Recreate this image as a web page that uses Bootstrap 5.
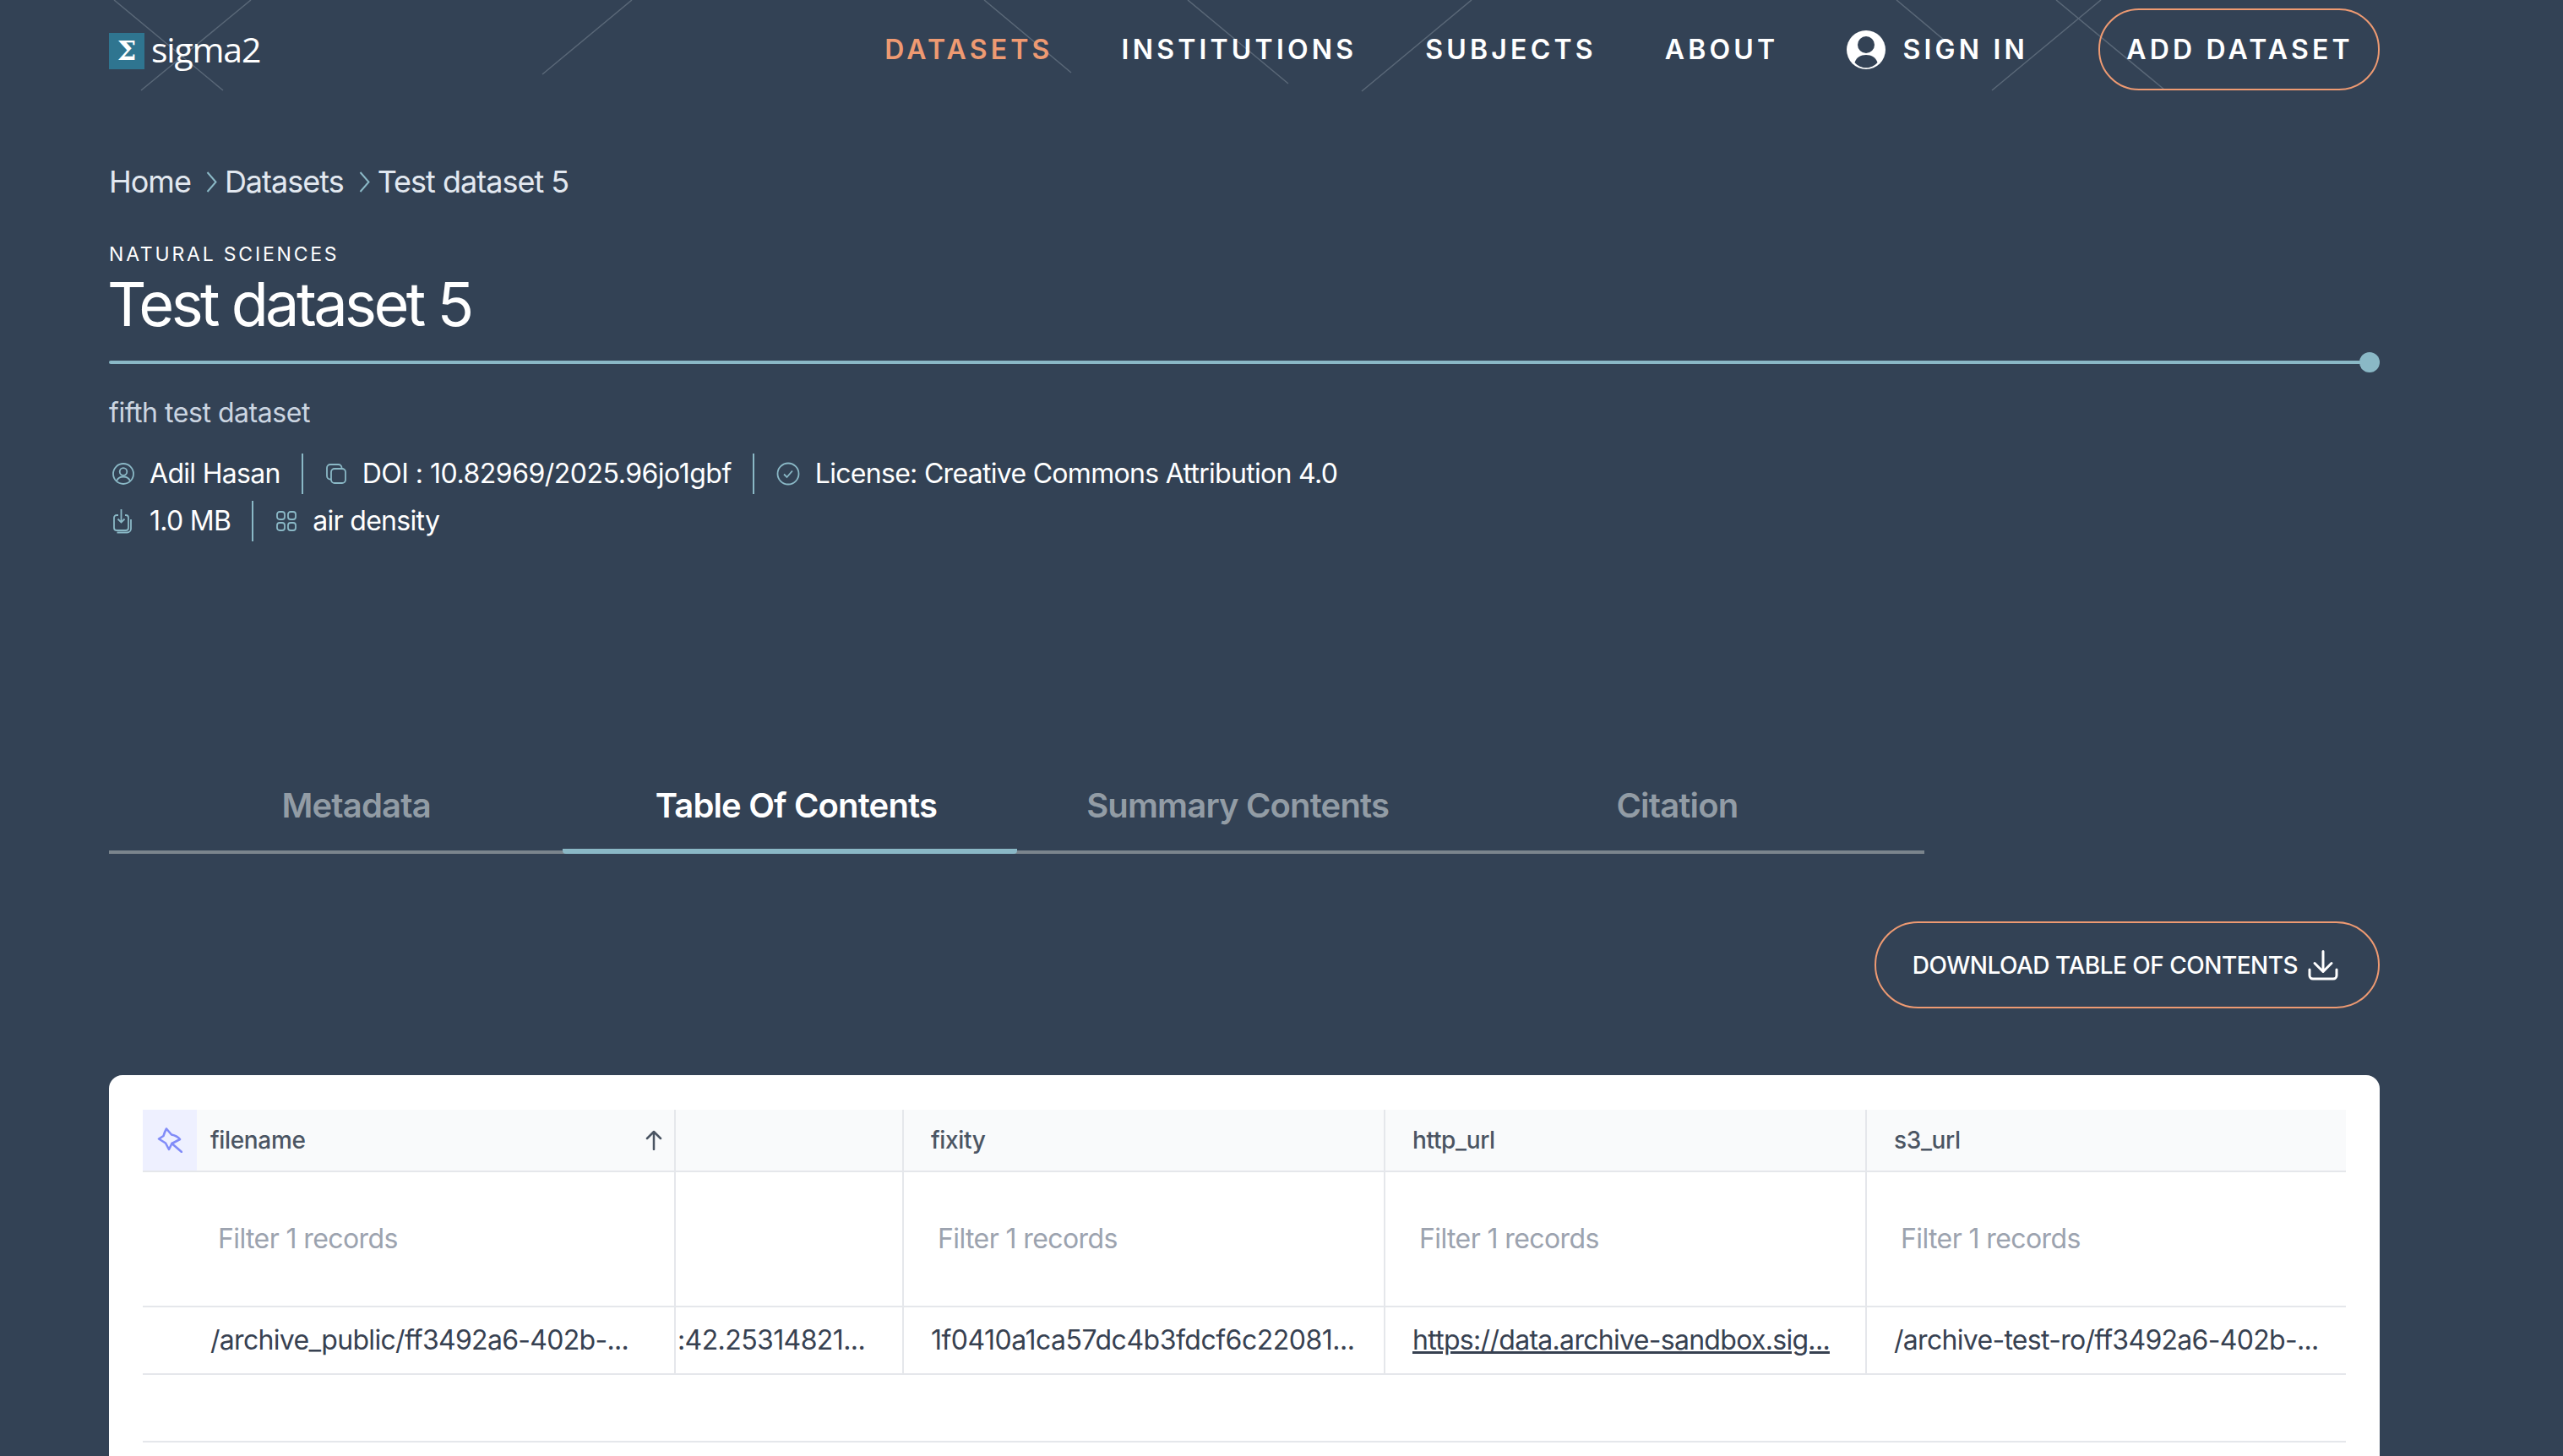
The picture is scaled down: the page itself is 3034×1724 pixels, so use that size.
<!DOCTYPE html>
<html lang="en">
<head>
<meta charset="utf-8">
<title>Test dataset 5</title>
<link href="https://cdn.jsdelivr.net/npm/bootstrap@5.3.0/dist/css/bootstrap.min.css" rel="stylesheet">
<style>
html,body{height:100%;}
body{background:#334255;font-family:Inter,"Liberation Sans",sans-serif;color:#fff;overflow:hidden;font-size:32px;position:relative;}
.deco{position:absolute;top:0;left:0;width:3034px;height:120px;pointer-events:none;}
.deco line{stroke:#5a6878;stroke-width:1.5;}
.shell{position:relative;padding:0 217px 0 129px;}
.topbar{height:108px;padding:10px 0 0;align-items:flex-start;}
.brandbox{display:flex;align-items:center;margin:29px 0 0;padding:0;height:43px;}
.sigbox{width:42px;height:43px;background:#2f7590;color:#fff;font:700 32px "DejaVu Serif",serif;line-height:43px;text-align:center;}
.sigword{font:500 41px "Open Sans",sans-serif;letter-spacing:-1.2px;color:#fff;margin-left:8px;line-height:43px;position:relative;top:-2px;}
.topnav{gap:81px;align-items:center;height:97px;}
.topbar .topnav .nav-link{padding:0;color:#fff;font-size:32px;font-weight:600;letter-spacing:4.2px;line-height:42px;display:flex;align-items:center;gap:20px;}
.topbar .topnav .nav-link.active{color:#ee9a72;}
.signlink{margin-right:2px;}
.btnpill{--bs-btn-color:#fff;--bs-btn-border-color:#ee9a72;--bs-btn-hover-color:#fff;--bs-btn-hover-border-color:#ee9a72;--bs-btn-hover-bg:transparent;--bs-btn-border-width:2px;}
.addbtn{width:333px;height:97px;border-radius:48px;font-size:32px;font-weight:600;letter-spacing:4.2px;padding:0 0 0 2px;display:flex;align-items:center;justify-content:center;}
.crumbs{margin:85px 0 0;height:44px;font-size:36px;line-height:44px;letter-spacing:-1px;}
.crumbs .breadcrumb-item{color:#e2e8f0;padding:0;display:flex;align-items:center;}
.crumbs .breadcrumb-item+.breadcrumb-item::before{display:none;}
.crumbs svg{margin:0 9px 0 18px;}
.crumbs a{color:#e2e8f0;text-decoration:none;}
.eyebrow{margin-top:45px;font-size:23px;line-height:38px;letter-spacing:2.8px;font-weight:400;height:38px;}
.pagetitle{font-size:72px;font-weight:400;line-height:80px;margin:0 0 0 -2px;letter-spacing:-3.6px;height:80px;}
.ruleline{position:relative;height:4px;background:#8ab8c6;margin-top:27px;border-radius:2px;}
.ruledot{position:absolute;right:0;top:-10px;width:24px;height:24px;border-radius:50%;background:#8ab8c6;}
.subline{font-size:32px;line-height:40px;color:#cbd5e1;margin-top:38px;letter-spacing:-.45px;}
.metablock{margin-top:28px;display:flex;flex-direction:column;gap:8px;}
.metarow{display:flex;height:48px;align-items:center;font-size:32px;line-height:48px;letter-spacing:-.7px;}
.metaitem{display:flex;align-items:center;height:48px;padding-right:25px;}
.metaitem+.metaitem{border-left:2px solid #8ab8c6;padding-left:26px;}
.metaitem svg{flex:none;margin-right:18px;margin-left:4px;}
.metaitem+.metaitem svg{margin-left:0;}
.metaitem .stackicon{margin-right:20px;}
.doitext{letter-spacing:-.5px;}
.tabstrip{width:2149px;border-bottom:4px solid #7b858d;flex-wrap:nowrap;margin-top:270px;}
.tabstrip .nav-item{flex:0 0 537.25px;}
.tabstrip .nav-link{display:block;height:100px;margin-bottom:-4px;padding:0;border:0;border-bottom:6px solid transparent;background:transparent;font-size:40px;font-weight:600;line-height:50px;padding-top:18px;color:#929ca5;text-align:center;box-sizing:border-box;border-radius:0;letter-spacing:-.85px;}
.tabstrip .nav-link.active{color:#fff;border-bottom-color:#8ab8c6;border-radius:0 0 4px 4px;}
.pl-a{padding-left:48px!important;}.pl-b{padding-left:15px!important;}.pr-c{padding-right:14px!important;}.pr-d{padding-right:48px!important;}
.dlbar{display:flex;justify-content:flex-end;margin-top:80px;}
.dlbtn{width:598px;height:103px;border-radius:52px;font-size:28px;font-weight:500;padding:0 4px 0 0;display:flex;align-items:center;justify-content:center;gap:12px;letter-spacing:-.5px;text-transform:uppercase;}
.datacard{margin-top:79px;background:#fff;border:0;border-radius:16px;padding:41px 40px 80px;color:#374151;}
.datatable{width:2608px;table-layout:fixed;border-collapse:separate;border-spacing:0;margin:0;--bs-table-bg:transparent;}
.datatable th,.datatable td{padding:0;border-bottom:2px solid #e5e7eb;vertical-align:middle;white-space:nowrap;overflow:hidden;font-weight:400;}
.datatable tr>*+*{border-left:2px solid #e5e7eb;}
.datatable tr.blankrow>*{border-left:0;}
.datatable thead th{background:#f9fafb;height:74px;font-size:28px;color:#4b5563;font-weight:500;padding-left:32px;letter-spacing:-.35px;}
.datatable thead th.firsthead{padding:0;}
.firstwrap{display:flex;align-items:center;height:72px;}
.pinbox{width:64px;height:72px;background:#eef0ff;display:flex;align-items:center;justify-content:center;flex:none;}
.headname{margin-left:16px;flex:1;}
.sortarrow{margin-right:13px;flex:none;}
.filterrow td{height:160px;font-size:32px;color:#9ca3af;padding-left:40px;letter-spacing:-.6px;}
.filterrow td.fc1{padding-left:89px;}
.datarow td{height:80px;font-size:32px;color:#374151;padding-left:32px;letter-spacing:-.7px;}
.datarow td.fc1{padding-left:80px;}
.datarow td.fc2{padding-left:2px;letter-spacing:-.6px;}
.datarow td.fc3{letter-spacing:-.5px;}
.datarow a{color:#374151;}
.blankrow td{height:80px;}
</style>
</head>
<body>
<svg class="deco" viewBox="0 0 3034 120" aria-hidden="true">
<line x1="135" y1="0" x2="264" y2="107"/><line x1="297" y1="0" x2="167" y2="107"/><line x1="748" y1="0" x2="642" y2="88"/>
<line x1="1165" y1="0" x2="1268" y2="86"/><line x1="1406" y1="0" x2="1525" y2="99"/><line x1="1742" y1="0" x2="1612" y2="108"/>
<line x1="2245" y1="0" x2="2301" y2="47"/><line x1="2434" y1="0" x2="2562" y2="106"/><line x1="2487" y1="0" x2="2358" y2="107"/>
</svg>
<div class="shell">
  <nav class="navbar navbar-expand topbar">
    <div class="d-flex justify-content-between align-items-start w-100">
      <a class="navbar-brand brandbox" href="#"><span class="sigbox">Σ</span><span class="sigword">sigma2</span></a>
      <ul class="navbar-nav topnav">
        <li class="nav-item"><a class="nav-link active" href="#">DATASETS</a></li>
        <li class="nav-item"><a class="nav-link" href="#">INSTITUTIONS</a></li>
        <li class="nav-item"><a class="nav-link" href="#">SUBJECTS</a></li>
        <li class="nav-item"><a class="nav-link" href="#">ABOUT</a></li>
        <li class="nav-item signlink"><a class="nav-link" href="#">
          <svg width="46" height="46" viewBox="0 0 46 46"><circle cx="23" cy="23" r="23" fill="#fff"/><circle cx="23" cy="17" r="10" fill="#334255"/><path d="M9.500 38c2-6 7-9 13.500-9s11.500 3 13.500 9c-3.500 4-8.500 6.300-13.500 6.300S13 42 9.500 38z" fill="#334255"/></svg>
          SIGN IN</a></li>
        <li class="nav-item"><a class="btn btnpill addbtn" href="#">ADD DATASET</a></li>
      </ul>
    </div>
  </nav>

  <ol class="breadcrumb crumbs">
    <li class="breadcrumb-item"><a href="#">Home</a></li>
    <li class="breadcrumb-item"><svg width="13" height="25" viewBox="0 0 13 25"><path d="M1.500 1l10 11.500-10 11.500" fill="none" stroke="#8ab8c6" stroke-width="2"/></svg><a href="#">Datasets</a></li>
    <li class="breadcrumb-item active"><svg width="13" height="25" viewBox="0 0 13 25"><path d="M1.500 1l10 11.500-10 11.500" fill="none" stroke="#8ab8c6" stroke-width="2"/></svg>Test dataset 5</li>
  </ol>

  <div class="eyebrow">NATURAL SCIENCES</div>
  <h1 class="pagetitle">Test dataset 5</h1>
  <div class="ruleline"><span class="ruledot"></span></div>
  <p class="subline mb-0">fifth test dataset</p>

  <div class="metablock">
    <div class="metarow">
      <div class="metaitem"><svg width="26" height="26" viewBox="0 0 26 26" fill="none" stroke="#8ab8c6" stroke-width="1.800"><circle cx="13" cy="13" r="12"/><circle cx="13" cy="10.500" r="4.300"/><path d="M5 21.500c1.500-3.500 4.500-5 8-5s6.500 1.500 8 5"/></svg>Adil Hasan</div>
      <div class="metaitem doitext"><svg width="26" height="26" viewBox="0 0 26 26" fill="none" stroke="#8ab8c6" stroke-width="1.800"><rect x="7" y="7" width="17" height="17" rx="4"/><path d="M7 19.500H6a4 4 0 0 1-4-4V6a4 4 0 0 1 4-4h9.500a4 4 0 0 1 4 4v1"/></svg>DOI : 10.82969/2025.96jo1gbf</div>
      <div class="metaitem"><svg width="28" height="28" viewBox="0 0 28 28" fill="none" stroke="#8ab8c6" stroke-width="1.800"><circle cx="14" cy="14" r="12.500"/><path d="M9 14.500l3.500 3.500 6.500-7.500"/></svg>License: Creative Commons Attribution 4.0</div>
    </div>
    <div class="metarow">
      <div class="metaitem"><svg class="stackicon" width="24" height="30" viewBox="0 0 24 30" fill="none" stroke="#8ab8c6" stroke-width="1.800"><path d="M7 8H5a3 3 0 0 0-3 3v12a3 3 0 0 0 3 3h11a3 3 0 0 0 3-3V11a3 3 0 0 0-3-3h-1"/><path d="M5.500 28.500h12a4.500 4.500 0 0 0 4.500-4.500V13"/><path d="M10.500 1v15M6.500 12.500l4 4 4-4"/></svg>1.0 MB</div>
      <div class="metaitem"><svg width="26" height="26" viewBox="0 0 26 26" fill="none" stroke="#8ab8c6" stroke-width="1.800"><rect x="2" y="2" width="9" height="9" rx="3"/><rect x="15" y="2" width="9" height="9" rx="3"/><rect x="2" y="15" width="9" height="9" rx="3"/><rect x="15" y="15" width="9" height="9" rx="3"/></svg>air density</div>
    </div>
  </div>

  <ul class="nav tabstrip">
    <li class="nav-item"><a class="nav-link pl-a" href="#">Metadata</a></li>
    <li class="nav-item"><a class="nav-link active pl-b" href="#">Table Of Contents</a></li>
    <li class="nav-item"><a class="nav-link pr-c" href="#">Summary Contents</a></li>
    <li class="nav-item"><a class="nav-link pr-d" href="#">Citation</a></li>
  </ul>

  <div class="dlbar">
    <a class="btn btnpill dlbtn" href="#">Download table of contents
      <svg width="36" height="36" viewBox="0 0 36 36" fill="none" stroke="#fff" stroke-width="3" stroke-linecap="round" stroke-linejoin="round"><path d="M18 1.500v24M8 15.500l10 10 10-10"/><path d="M2 23v7a4 4 0 0 0 4 4h24a4 4 0 0 0 4-4v-7"/></svg></a>
  </div>

  <div class="card datacard">
    <table class="table datatable">
      <colgroup><col style="width:629px"><col style="width:270px"><col style="width:570px"><col style="width:570px"><col style="width:569px"></colgroup>
      <thead>
        <tr>
          <th class="firsthead"><div class="firstwrap"><span class="pinbox"><svg width="30" height="30" viewBox="0 0 30 30" fill="none" stroke="#818cf8" stroke-width="2.600" stroke-linecap="round" stroke-linejoin="round"><path d="M11 1.500L17 8.500Q24 10 27 14L17.500 19 14 26 10 18.500 2 13.500 7.500 10Q9 5 11 1.500Z"/><path d="M17.500 19L29 29"/></svg></span><span class="headname">filename</span><svg class="sortarrow" width="22" height="24" viewBox="0 0 22 24" fill="none" stroke="#4b5563" stroke-width="2.500" stroke-linecap="round" stroke-linejoin="round"><path d="M11 23V2M3 10l8-8 8 8"/></svg></div></th>
          <th></th>
          <th>fixity</th>
          <th>http_url</th>
          <th>s3_url</th>
        </tr>
      </thead>
      <tbody>
        <tr class="filterrow"><td class="fc1">Filter 1 records</td><td></td><td>Filter 1 records</td><td>Filter 1 records</td><td>Filter 1 records</td></tr>
        <tr class="datarow"><td class="fc1">/archive_public/ff3492a6-402b-...</td><td class="fc2">:42.25314821...</td><td class="fc3">1f0410a1ca57dc4b3fdcf6c22081...</td><td><a href="#">https://data.archive-sandbox.sig...</a></td><td>/archive-test-ro/ff3492a6-402b-...</td></tr>
        <tr class="blankrow"><td colspan="5"></td></tr>
      </tbody>
    </table>
  </div>
</div>
<script src="https://cdn.jsdelivr.net/npm/bootstrap@5.3.0/dist/js/bootstrap.bundle.min.js"></script>
</body>
</html>
